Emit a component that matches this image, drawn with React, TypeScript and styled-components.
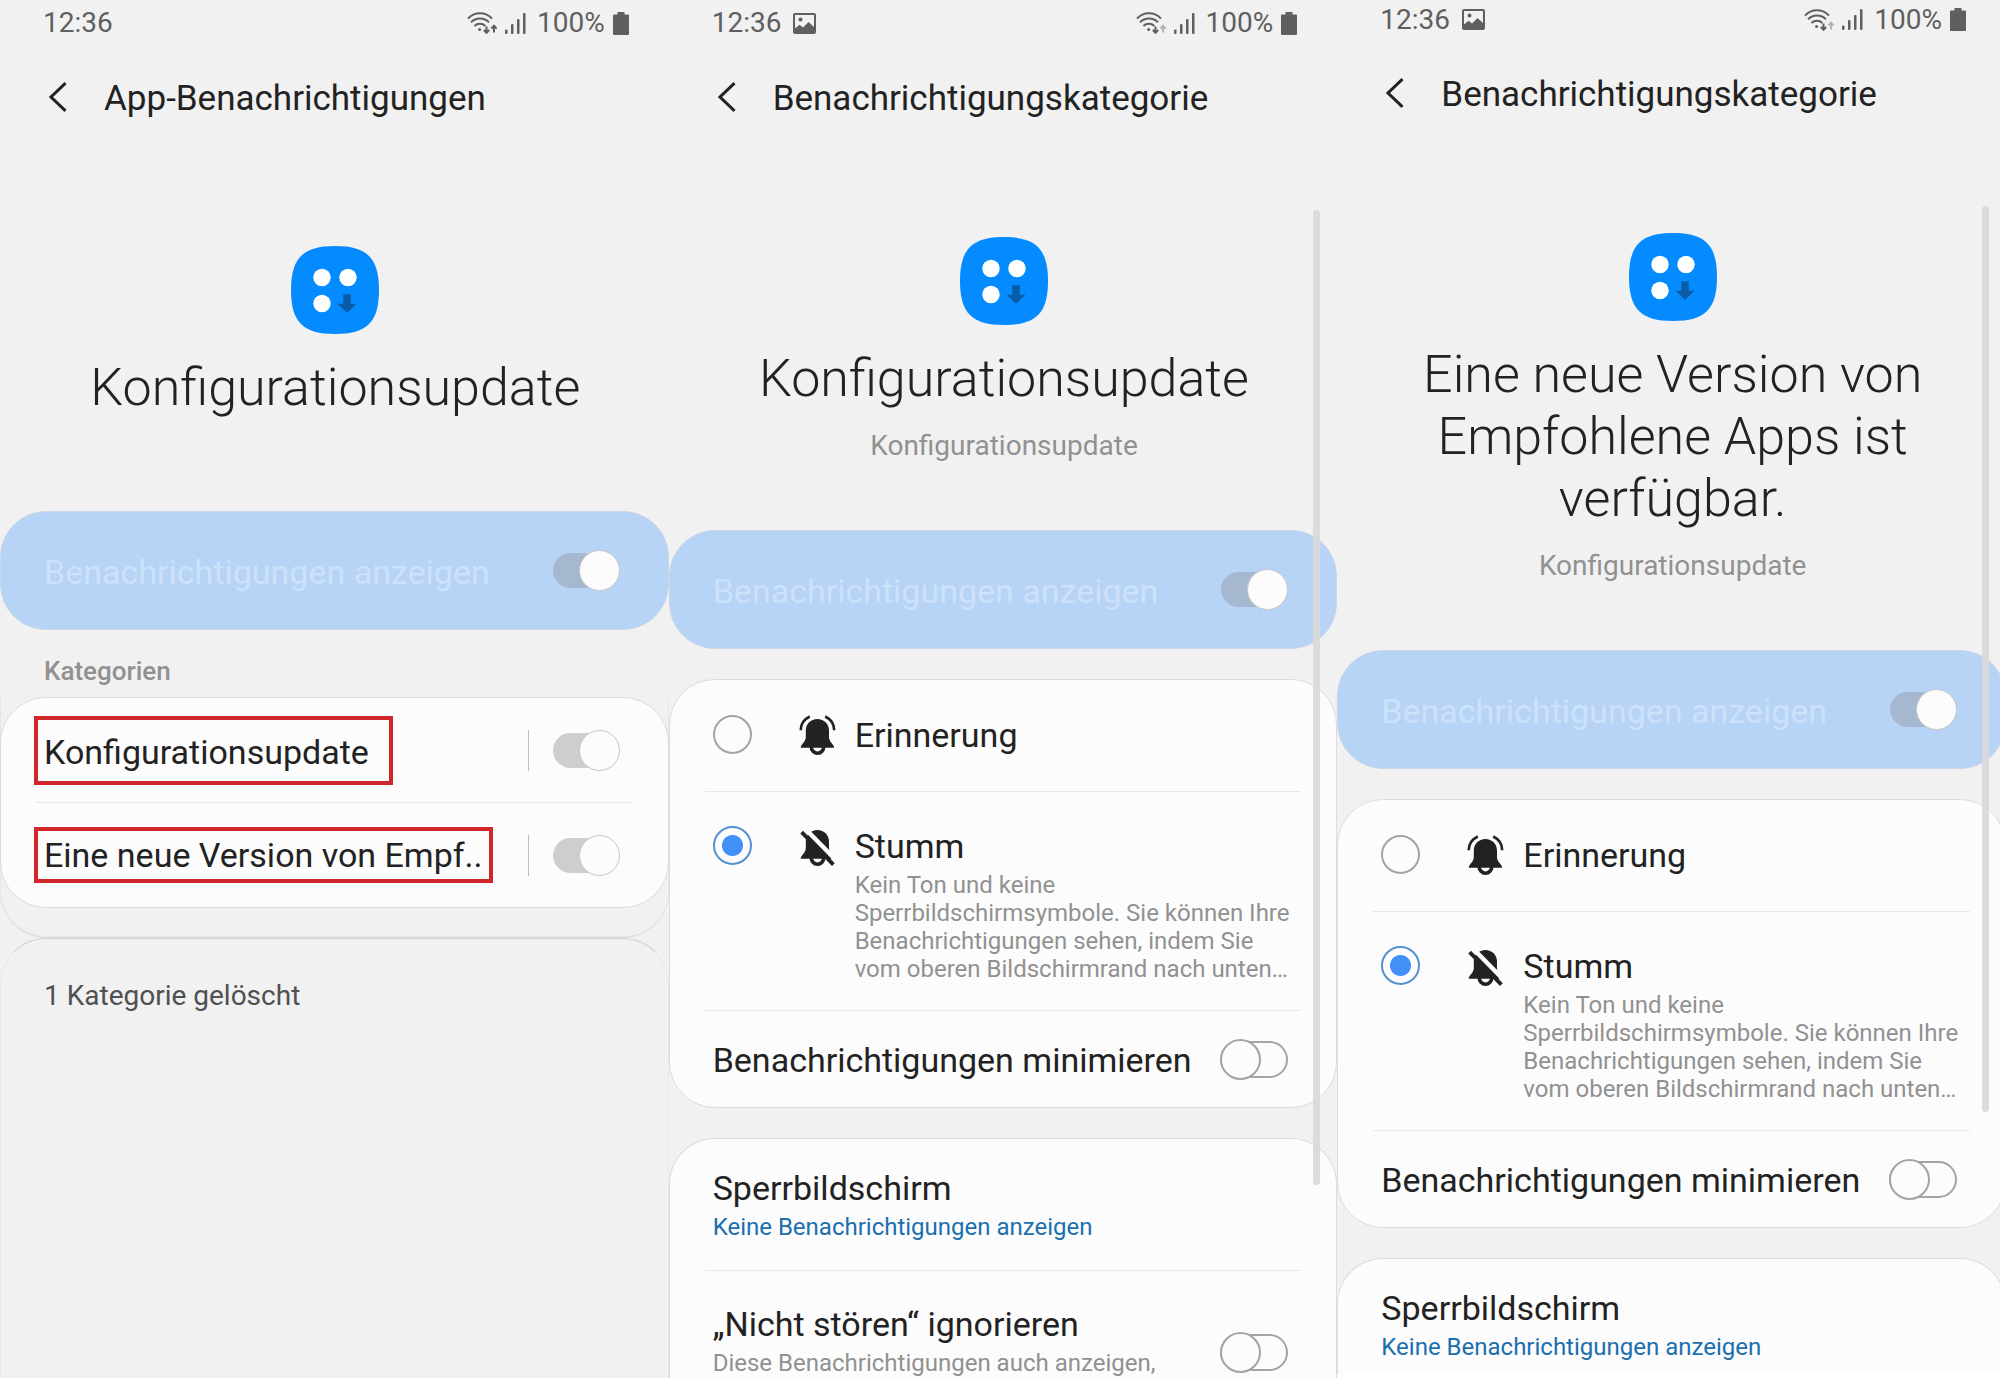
import React, { useId } from "react";
import styled, { createGlobalStyle, css } from "styled-components";

const color = {
  page: "#f1f1f1",
  card: "#fcfcfc",
  line: "#dcdcdc",
  rule: "#e8e8e8",
  text: "#222222",
  muted: "#919191",
  status: "#5f5f5f",
  link: "#1a6fae",
  accent: "#4290f7",
  master: "#b7d3f6",
};

const GlobalStyle = createGlobalStyle`
  *, *::before, *::after { box-sizing: border-box; }
  body {
    margin: 0;
    background: #ffffff;
    color: ${color.text};
    font-family: Roboto, "Liberation Sans", sans-serif;
    overflow: hidden;
  }
  h1, h2, h3, p { margin: 0; font-weight: 400; }
`;

/* ---------- frame ---------- */

const Board = styled.main`
  display: grid;
  grid-template-columns: repeat(3, 1fr);
  align-items: start;
  width: calc(100% + 6px);
`;

const Phone = styled.section<{ $raised?: boolean }>`
  position: relative;
  display: flex;
  flex-direction: column;
  height: calc(100vh - ${(p) => (p.$raised ? 8 : 4)}px);
  min-width: 0;
  overflow: hidden;
  background: ${color.page};
`;

const ScrollThumb = styled.div<{ $raised?: boolean }>`
  position: absolute;
  top: ${(p) => (p.$raised ? 206 : 210)}px;
  bottom: ${(p) => (p.$raised ? 262 : 193)}px;
  right: 17px;
  width: 7px;
  border-radius: 4px;
  background: rgba(217, 217, 217, 0.92);
`;

const StatusBar = styled.div<{ $raised?: boolean }>`
  display: flex;
  align-items: center;
  flex-shrink: 0;
  height: ${(p) => (p.$raised ? 43 : 47)}px;
  padding: 0 40px ${(p) => (p.$raised ? 4 : 1)}px 43px;
  font-size: 28px;
  line-height: 32px;
  color: ${color.status};
`;

const Notices = styled.span`
  display: flex;
  margin-left: 12px;
`;

const StatusIcons = styled.span`
  display: flex;
  align-items: center;
  gap: 8px;
  margin-left: auto;
`;

const Percent = styled.span`
  padding-left: 3px;
`;

const AppBar = styled.header`
  display: flex;
  align-items: center;
  flex-shrink: 0;
  height: 104px;
  padding-left: 44px;
`;

const BackButton = styled.button`
  display: flex;
  padding: 0 0 4px 4px;
  width: 60px;
  border: 0;
  background: none;
  color: ${color.text};
`;

const ScreenTitle = styled.h1`
  font-size: 35px;
  line-height: 40px;
`;

const Hero = styled.div<{ $top: number; $bottom: number }>`
  display: flex;
  flex-direction: column;
  align-items: center;
  flex-shrink: 0;
  padding: ${(p) => p.$top}px 59px ${(p) => p.$bottom}px 61px;
  text-align: center;
`;

const HeroTitle = styled.h2`
  margin-top: 23px;
  font-size: 52px;
  line-height: 62px;
  font-weight: 300;
`;

const HeroApp = styled.p`
  margin-top: 19px;
  font-size: 28px;
  line-height: 33px;
  color: ${color.muted};
`;

/* ---------- cards and rows ---------- */

const MasterRow = styled.div`
  display: flex;
  align-items: center;
  justify-content: space-between;
  flex-shrink: 0;
  height: 119px;
  padding: 0 49px 0 43px;
  border: 1px solid #c9d6e6;
  border-radius: 46px;
  background: ${color.master};
`;

const MasterLabel = styled.label`
  padding-top: 2px;
  font-size: 34px;
  line-height: 40px;
  color: #cde1fa;
`;

const Card = styled.div<{ $gap?: boolean; $open?: boolean }>`
  flex-shrink: 0;
  margin-top: ${(p) => (p.$gap ? 30 : 0)}px;
  border: 1px solid ${color.line};
  border-radius: 46px;
  background: ${color.card};
  ${(p) =>
    p.$open &&
    css`
      flex-grow: 1;
      border-bottom: 0;
      border-radius: 46px 46px 0 0;
    `}
`;

const Rule = styled.hr`
  height: 1px;
  margin: 0 35px;
  border: 0;
  background: ${color.rule};
`;

const GroupLabel = styled.h3`
  padding: 26px 44px 11px;
  font-size: 26px;
  line-height: 30px;
  font-weight: 500;
  color: ${color.muted};
`;

const CategoryGroup = styled.div`
  flex-shrink: 0;
  padding-bottom: 29px;
  border-bottom: 1px solid ${color.line};
  border-radius: 0 0 46px 46px;
  box-shadow: inset 1px -1px 0 #e6e6e6, inset -1px 0 0 #e6e6e6;
`;

const CategoryRow = styled.div`
  display: flex;
  align-items: center;
  height: 104px;
  padding: 0 49px 0 33px;
`;

const MarkedLabel = styled.label<{ $roomy?: boolean }>`
  padding: ${(p) => (p.$roomy ? "12px 20px 9px 6px" : "4px 6px")};
  border: 4px solid #d2262d;
  font-size: 34px;
  line-height: 40px;
  white-space: nowrap;
`;

const Splitter = styled.span`
  width: 1px;
  height: 41px;
  margin: 0 24px 0 auto;
  background: #bdbdbd;
`;

const DeletedCard = styled.div`
  flex-grow: 1;
  padding: 40px 43px;
  border: 1px solid #e8e8e8;
  border-top-color: #d0d0d0;
  border-bottom: 0;
  border-radius: 46px 46px 0 0;
  font-size: 28px;
  line-height: 33px;
  color: #505050;
`;

const OptionRow = styled.div<{ $pad: string }>`
  display: flex;
  align-items: flex-start;
  padding: ${(p) => p.$pad};
`;

const OptionIcon = styled.span`
  display: flex;
  align-items: center;
  flex-shrink: 0;
  width: 56px;
  height: 40px;
  margin-left: 47px;
`;

const SettingRow = styled.div<{ $tall?: boolean }>`
  display: flex;
  align-items: center;
  justify-content: space-between;
  padding: ${(p) => (p.$tall ? "33px 48px 33px 43px" : "27px 48px 27px 43px")};
`;

const LinkRow = styled.a`
  display: block;
  padding: 29px 48px 29px 43px;
  color: inherit;
  text-decoration: none;
`;

const TextBlock = styled.div<{ $tall?: boolean }>`
  min-width: 0;
  min-height: ${(p) => (p.$tall ? 96 : 40)}px;
`;

const ItemTitle = styled.label<{ $low?: boolean }>`
  display: block;
  padding-top: ${(p) => (p.$low ? 2 : 0)}px;
  font-size: 34px;
  line-height: 40px;
`;

const ItemNote = styled.p<{ $link?: boolean }>`
  display: block;
  margin-top: 5px;
  font-size: 24px;
  line-height: 28px;
  color: ${(p) => (p.$link ? color.link : color.muted)};
`;

/* ---------- controls ---------- */

const Switch = styled.input.attrs({ type: "checkbox", role: "switch" })<{
  $track?: string;
}>`
  appearance: none;
  position: relative;
  flex-shrink: 0;
  width: 68px;
  height: 37px;
  margin: 0;
  border: 2px solid #a4a4a4;
  border-radius: 19px;
  background: ${color.card};

  &::before {
    content: "";
    position: absolute;
    top: -4px;
    left: -2px;
    width: 41px;
    height: 41px;
    border: 2px solid #a4a4a4;
    border-radius: 50%;
    background: ${color.card};
  }

  &:checked {
    height: 35px;
    width: 66px;
    border: 0;
    background: ${(p) => p.$track ?? "#cecece"};
  }

  &:checked::before {
    top: -3px;
    left: 26px;
    border: 1px solid #c6c6c6;
  }
`;

const Radio = styled.input.attrs({ type: "radio" })`
  appearance: none;
  flex-shrink: 0;
  width: 39px;
  height: 39px;
  margin: 0;
  border: 2px solid #a3a3a3;
  border-radius: 50%;

  &:checked {
    border-color: #5590cf;
    background: radial-gradient(circle, ${color.accent} 10px, transparent 11px);
  }
`;

/* ---------- drawings ---------- */

const WifiIcon = ({ idle }: { idle?: boolean }) => (
  <svg width="30" height="22" viewBox="0 0 30 22" fill="none" stroke="currentColor" strokeWidth="2">
    <path d="M1 6.700A16 16 0 0 1 25 6.700" />
    <path d="M4 10.400A12.400 12.400 0 0 1 22 10.400" />
    <path d="M7.400 14A8 8 0 0 1 18.400 14" />
    <circle cx="12.600" cy="17.400" r="1.500" fill="currentColor" stroke="none" />
    <path d="M19.500 14.500v6M16.800 18l2.700 2.800 2.700-2.800" />
    <path d="M27 20.500v-6M24.300 16.600l2.700-2.800 2.700 2.800" stroke={idle ? "#b4b4b4" : "currentColor"} />
  </svg>
);

const SignalIcon = () => (
  <svg width="21" height="21" viewBox="0 0 21 21" fill="currentColor">
    <rect x="0" y="16.500" width="2.500" height="4.500" rx="1" />
    <rect x="6" y="11" width="2.500" height="10" rx="1" />
    <rect x="12" y="6" width="2.500" height="15" rx="1" />
    <rect x="18" y="0" width="2.500" height="21" rx="1" />
  </svg>
);

const BatteryIcon = () => (
  <svg width="16" height="23" viewBox="0 0 16 23" fill="currentColor">
    <path d="M4.500 0h7v2.500H15a1 1 0 0 1 1 1V22a1 1 0 0 1-1 1H1a1 1 0 0 1-1-1V3.500a1 1 0 0 1 1-1h3.500z" />
  </svg>
);

const PictureIcon = () => (
  <svg width="23" height="21" viewBox="0 0 23 21">
    <path
      fill="currentColor"
      fillRule="evenodd"
      d="M2 0h19a2 2 0 0 1 2 2v17a2 2 0 0 1-2 2H2a2 2 0 0 1-2-2V2a2 2 0 0 1 2-2zM2 2v13.500l4.500-3.800 3.500 2.800 5.500-5.500 5.500 5V2zM7.500 4.500a2 2 0 1 1 0 4 2 2 0 0 1 0-4z"
    />
  </svg>
);

const BackIcon = () => (
  <svg width="20" height="30" viewBox="0 0 20 30" fill="none" stroke="currentColor" strokeWidth="3">
    <path d="M17.500 1.200L3 15l14.500 13.800" />
  </svg>
);

const AppIcon = () => (
  <svg width="88" height="88" viewBox="0 0 88 88">
    <path fill="#048bff" d="M44 0C76 0 88 12 88 44S76 88 44 88 0 76 0 44 12 0 44 0z" />
    <g fill="#ffffff">
      <circle cx="31" cy="31.500" r="8.700" />
      <circle cx="57" cy="31.500" r="8.700" />
      <circle cx="31" cy="57.500" r="8.700" />
    </g>
    <path fill="#0a5ca6" d="M52.300 48.300h7.400v9.400h5.800L56 67l-9.300-9.300h5.600z" />
  </svg>
);

const BellShape = () => (
  <>
    <path
      fill="currentColor"
      d="M18.400 4C25 4 30 9 30 15.500V22c0 3.800 2.500 5.500 5 9.500v1.300H1.800v-1.300c2.500-4 5-5.700 5-9.500v-6.500C6.800 9 11.800 4 18.400 4z"
    />
    <path fill="none" stroke="currentColor" strokeWidth="3.600" d="M12.200 31.500a6.300 6.800 0 0 0 12.600 0" />
  </>
);

const BellIcon = () => (
  <svg width="37" height="41" viewBox="0 0 37 41">
    <BellShape />
    <path
      fill="none"
      stroke="currentColor"
      strokeWidth="2.600"
      d="M1.700 15.200C1.700 9 5 4.300 10.800 1.500M35.200 15.200C35.200 9 32 4.300 26.200 1.500"
    />
  </svg>
);

const BellOffIcon = () => (
  <svg width="37" height="41" viewBox="0 0 37 41">
    <BellShape />
    <path stroke={color.card} strokeWidth="4.500" d="M4 0.500L40 37.200" />
    <path stroke="currentColor" strokeWidth="3.800" d="M2.600 6.200L34.400 38.700" />
  </svg>
);

/* ---------- screens ---------- */

type TopProps = { title: string; raised?: boolean; picture?: boolean };

const Top = ({ title, raised, picture }: TopProps) => (
  <>
    <StatusBar $raised={raised}>
      <span>12:36</span>
      {picture && (
        <Notices>
          <PictureIcon />
        </Notices>
      )}
      <StatusIcons>
        <WifiIcon idle={picture} />
        <SignalIcon />
        <Percent>100%</Percent>
        <BatteryIcon />
      </StatusIcons>
    </StatusBar>
    <AppBar>
      <BackButton type="button" aria-label="Zurück">
        <BackIcon />
      </BackButton>
      <ScreenTitle>{title}</ScreenTitle>
    </AppBar>
  </>
);

const MasterSwitch = () => {
  const id = useId();
  return (
    <MasterRow>
      <MasterLabel htmlFor={id}>Benachrichtigungen anzeigen</MasterLabel>
      <Switch id={id} defaultChecked disabled $track="#a6b8cf" />
    </MasterRow>
  );
};

const Category = ({ name, roomy }: { name: string; roomy?: boolean }) => {
  const id = useId();
  return (
    <CategoryRow>
      <MarkedLabel htmlFor={id} $roomy={roomy}>
        {name}
      </MarkedLabel>
      <Splitter />
      <Switch id={id} defaultChecked disabled />
    </CategoryRow>
  );
};

const AppScreen = () => (
  <Phone>
    <Top title="App-Benachrichtigungen" />
    <Hero $top={95} $bottom={92}>
      <AppIcon />
      <HeroTitle>Konfigurationsupdate</HeroTitle>
    </Hero>
    <MasterSwitch />
    <GroupLabel>Kategorien</GroupLabel>
    <CategoryGroup>
      <Card>
        <Category name="Konfigurationsupdate" roomy />
        <Rule />
        <Category name="Eine neue Version von Empf.." />
      </Card>
    </CategoryGroup>
    <DeletedCard>1 Kategorie gelöscht</DeletedCard>
  </Phone>
);

type CategoryScreenProps = { heading: string; raised?: boolean; extended?: boolean };

const CategoryScreen = ({ heading, raised, extended }: CategoryScreenProps) => {
  const id = useId();
  return (
    <Phone $raised={raised}>
      <Top title="Benachrichtigungskategorie" raised={raised} picture />
      <Hero $top={86} $bottom={68}>
        <AppIcon />
        <HeroTitle>{heading}</HeroTitle>
        <HeroApp>Konfigurationsupdate</HeroApp>
      </Hero>
      <MasterSwitch />
      <Card $gap>
        <OptionRow $pad="35px 42px 36px 43px">
          <Radio id={`${id}-alert`} name={`${id}-mode`} />
          <OptionIcon>
            <BellIcon />
          </OptionIcon>
          <TextBlock>
            <ItemTitle htmlFor={`${id}-alert`}>Erinnerung</ItemTitle>
          </TextBlock>
        </OptionRow>
        <Rule />
        <OptionRow $pad="34px 42px 27px 43px">
          <Radio id={`${id}-silent`} name={`${id}-mode`} defaultChecked />
          <OptionIcon>
            <BellOffIcon />
          </OptionIcon>
          <TextBlock>
            <ItemTitle htmlFor={`${id}-silent`}>Stumm</ItemTitle>
            <ItemNote>
              Kein Ton und keine Sperrbildschirmsymbole. Sie können Ihre Benachrichtigungen sehen,
              indem Sie vom oberen Bildschirmrand nach unten…
            </ItemNote>
          </TextBlock>
        </OptionRow>
        <Rule />
        <SettingRow>
          <ItemTitle htmlFor={`${id}-min`} $low>
            Benachrichtigungen minimieren
          </ItemTitle>
          <Switch id={`${id}-min`} />
        </SettingRow>
      </Card>
      <Card $gap $open>
        <LinkRow href="#sperrbildschirm">
          <ItemTitle as="span">Sperrbildschirm</ItemTitle>
          <ItemNote as="span" $link>
            Keine Benachrichtigungen anzeigen
          </ItemNote>
        </LinkRow>
        {extended && (
          <>
            <Rule />
            <SettingRow $tall>
              <TextBlock $tall>
                <ItemTitle htmlFor={`${id}-dnd`}>„Nicht stören“ ignorieren</ItemTitle>
                <ItemNote>Diese Benachrichtigungen auch anzeigen,</ItemNote>
              </TextBlock>
              <Switch id={`${id}-dnd`} />
            </SettingRow>
          </>
        )}
      </Card>
      <ScrollThumb $raised={raised} />
    </Phone>
  );
};

const App = () => (
  <>
    <GlobalStyle />
    <Board>
      <AppScreen />
      <CategoryScreen heading="Konfigurationsupdate" extended />
      <CategoryScreen heading="Eine neue Version von Empfohlene Apps ist verfügbar." raised />
    </Board>
  </>
);

export default App;
